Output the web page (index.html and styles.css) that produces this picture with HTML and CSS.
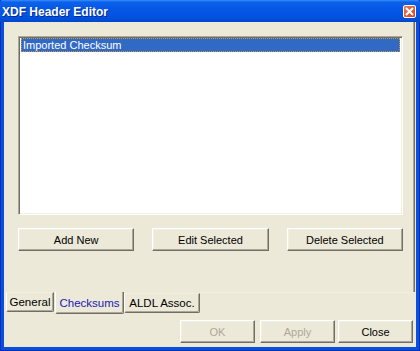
FILE: index.html
```html
<!DOCTYPE html>
<html>
<head>
<meta charset="utf-8">
<link rel="stylesheet" href="styles.css">
</head>
<body>
<div class="window">
  <div class="titlebar">
    <span class="title">XDF Header Editor</span>
    <span class="close-btn"><svg width="9" height="9" viewBox="0 0 9 9"><path d="M1 1 L8 8 M8 1 L1 8" stroke="#fff" stroke-width="2" fill="none"/></svg></span>
  </div>
  <div class="client">
    <div class="page">
      <div class="listbox">
        <div class="item selected">Imported Checksum</div>
      </div>
      <div class="btn-row">
        <button class="btn wide">Add New</button>
        <button class="btn wide">Edit Selected</button>
        <button class="btn wide">Delete Selected</button>
      </div>
    </div>
    <div class="tabs">
      <div class="tab tab-general">General</div>
      <div class="tab tab-active">Checksums</div>
      <div class="tab tab-aldl">ALDL Assoc.</div>
      <div class="tab-fill"></div>
    </div>
    <div class="footer">
      <button class="btn small disabled">OK</button>
      <button class="btn small disabled apply">Apply</button>
      <button class="btn small close">Close</button>
    </div>
  </div>
</div>
</body>
</html>
```

FILE: styles.css
```css
* { box-sizing: border-box; }
html, body { margin: 0; padding: 0; }
body {
  width: 420px;
  height: 351px;
  overflow: hidden;
  font-family: "Liberation Sans", Arial, sans-serif;
  font-size: 11px;
}
.window {
  width: 420px;
  height: 351px;
  background: #0A4FDC;
  box-shadow: inset 1px 0 0 #0030B8, inset -1px 0 0 #0030B8, inset 0 -1px 0 #0030B8;
  padding: 0 4px 4px 4px;
  display: flex;
  flex-direction: column;
}
.titlebar {
  height: 22px;
  margin: 0 -4px;
  padding: 0 4px 0 2px;
  background: linear-gradient(#3B8DFA 0, #0C62EA 2px, #0558E6 40%, #0052DE 80%, #0046CC 100%);
  display: flex;
  align-items: center;
  justify-content: space-between;
  border-radius: 3px 3px 0 0;
}
.title {
  color: #fff;
  font-weight: bold;
  font-size: 12px;
  font-family: "Liberation Sans", Arial, sans-serif;
  text-shadow: 1px 1px 0 #0A2890;
  padding-top: 1px;
}
.close-btn {
  width: 13px;
  height: 13px;
  margin-top: 1px;
  border: 1px solid #fff;
  border-radius: 2px;
  background: linear-gradient(135deg, #E87C5E, #D4421E);
  display: flex;
  align-items: center;
  justify-content: center;
}
.client {
  flex: 1;
  background: #ECE9D8;
  display: flex;
  flex-direction: column;
}
.page {
  height: 270px;
  margin-left: 2px;
  margin-right: 1px;
  border-right: 1px solid #716F64;
  box-shadow: inset -1px 0 0 #ACA899;
  padding: 14px 11px 0 12px;
}
.listbox {
  height: 179px;
  background: #fff;
  border-top: 1px solid #ACA899;
  border-left: 1px solid #ACA899;
  border-right: 1px solid #fff;
  border-bottom: 1px solid #fff;
  box-shadow: inset 1px 1px 0 #716F64, inset -1px -1px 0 #F1EFE2;
  padding: 1px 2px 0 2px;
}
.item {
  height: 14px;
  line-height: 12px;
  padding-left: 1px;
  white-space: nowrap;
}
.selected {
  background: #316AC5;
  color: #fff;
  border: 1px dotted #CE953A;
}
.btn-row {
  display: flex;
  gap: 18px;
  margin-top: 13px;
}
.btn {
  height: 23px;
  padding: 0;
  margin: 0;
  font-family: "Liberation Sans", Arial, sans-serif;
  font-size: 11px;
  color: #000;
  background: #ECE9D8;
  border-top: 1px solid #fff;
  border-left: 1px solid #fff;
  border-right: 1px solid #716F64;
  border-bottom: 1px solid #716F64;
  box-shadow: inset -1px -1px 0 #ACA899, inset 1px 1px 0 #F1EFE2;
}
.wide { width: 117px; }
.tabs {
  display: flex;
  height: 24px;
  align-items: flex-start;
  padding-left: 2px;
}
.tab {
  height: 20px;
  line-height: 18px;
  padding: 0;
  text-align: center;
  border-left: 1px solid #fff;
  border-right: 1px solid #716F64;
  border-bottom: 1px solid #716F64;
  border-top: 1px solid #F1EFE2;
  box-shadow: inset -1px -1px 0 #ACA899;
  font-size: 11.5px;
  white-space: nowrap;
  border-radius: 0 0 2px 2px;
}
.tab-general { width: 48px; }
.tab-active {
  width: 69px;
  height: 22px;
  line-height: 22px;
  margin-left: 1px;
  border-top: none;
  color: #1818B8;
}
.tab-aldl {
  width: 76px;
  margin-left: 0;
  margin-top: 1px;
  height: 20px;
}
.tab-fill {
  flex: 1;
  height: 1px;
  background: #F1EFE2;
  margin-right: 1px;
}
.footer {
  display: flex;
  padding-left: 176px;
  margin-top: 4px;
}
.small { width: 75px; }
.apply { margin-left: 5px; }
.close { margin-left: 3px; }
.disabled { color: #ACA899; }
```
